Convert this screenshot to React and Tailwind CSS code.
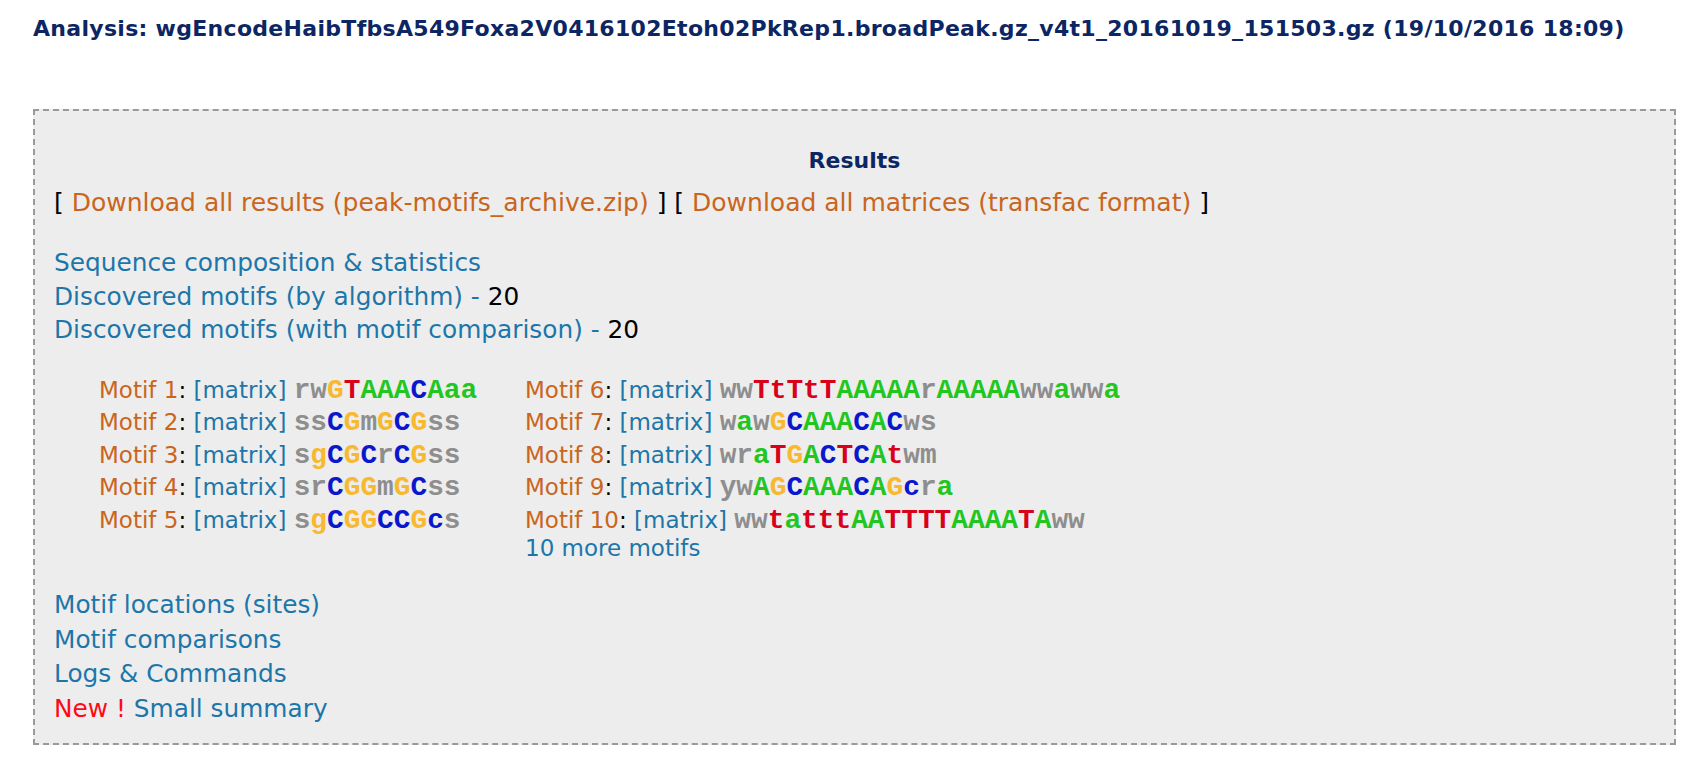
const motifsLeft = [
  { n: 1, seq: 'rwGTAAACAaa' },
  { n: 2, seq: 'ssCGmGCGss' },
  { n: 3, seq: 'sgCGCrCGss' },
  { n: 4, seq: 'srCGGmGCss' },
  { n: 5, seq: 'sgCGGCCGcs' },
];

const motifsRight = [
  { n: 6, seq: 'wwTtTtTAAAAArAAAAAwwawwa' },
  { n: 7, seq: 'wawGCAAACACws' },
  { n: 8, seq: 'wraTGACTCAtwm' },
  { n: 9, seq: 'ywAGCAAACAGcra' },
  { n: 10, seq: 'wwtatttAATTTTAAAATAww' },
];

const letterColor = {
  a: 'text-[#21c621]',
  c: 'text-[#0b17cc]',
  g: 'text-[#f8b82f]',
  t: 'text-[#d9001a]',
};

function Seq({ seq }) {
  return (
    <span className="font-['Liberation_Mono',monospace] font-bold text-[27.8px] leading-[32.5px]">
      {seq.split('').map((ch, i) => (
        <span key={i} className={letterColor[ch.toLowerCase()] || 'text-[#8e8e8e]'}>
          {ch}
        </span>
      ))}
    </span>
  );
}

function MotifRow({ m }) {
  return (
    <div className="h-[32.5px] leading-[32.5px] whitespace-nowrap">
      <a href="#" className="text-[#c9651c]">Motif {m.n}</a>
      <span className="text-black">: </span>
      <a href="#" className="text-[#1d76a9]">[matrix]</a>{' '}
      <Seq seq={m.seq} />
    </div>
  );
}

export default function App() {
  return (
    <div className="min-h-screen bg-white font-['DejaVu_Sans',Verdana,sans-serif]">
      <h3 className="pt-[16px] pl-[33px] text-[22px] leading-[26px] tracking-[0.3px] font-bold text-[#0c2663] whitespace-nowrap">
        Analysis: wgEncodeHaibTfbsA549Foxa2V0416102Etoh02PkRep1.broadPeak.gz_v4t1_20161019_151503.gz (19/10/2016 18:09)
      </h3>

      <div className="mt-[67px] ml-[33px] w-[1643px] border-2 border-dashed border-[#9a9a9a] bg-[#ededed] pt-[36px] pb-[17px] px-[19px] text-[25px]">
        <div className="text-center text-[22px] leading-[27px] font-bold text-[#0c2663]">Results</div>

        <p className="mt-[12px] leading-[34px] text-black">
          [ <a href="#" className="text-[#c9651c]">Download all results (peak-motifs_archive.zip)</a> ] [{' '}
          <a href="#" className="text-[#c9651c]">Download all matrices (transfac format)</a> ]
        </p>

        <div className="mt-[26px] leading-[33.5px] text-[#1d76a9] text-[24.8px]">
          <div><a href="#">Sequence composition &amp; statistics</a></div>
          <div>
            <a href="#">Discovered motifs (by algorithm) - </a>
            <span className="text-black">20</span>
          </div>
          <div>
            <a href="#">Discovered motifs (with motif comparison) - </a>
            <span className="text-black">20</span>
          </div>
        </div>

        <div className="mt-[27px] ml-[45px] flex text-[23px]">
          <div className="w-[426px]">
            {motifsLeft.map((m) => (
              <MotifRow key={m.n} m={m} />
            ))}
          </div>
          <div>
            {motifsRight.map((m) => (
              <MotifRow key={m.n} m={m} />
            ))}
            <div className="leading-[24px]">
              <a href="#" className="text-[#1d76a9]">10 more motifs</a>
            </div>
          </div>
        </div>

        <div className="mt-[28px] leading-[34.5px] text-[#1d76a9] text-[24.8px]">
          <div><a href="#">Motif locations (sites)</a></div>
          <div><a href="#">Motif comparisons</a></div>
          <div><a href="#">Logs &amp; Commands</a></div>
          <div>
            <span className="text-[#ff0a14]">New ! </span>
            <a href="#">Small summary</a>
          </div>
        </div>
      </div>
    </div>
  );
}
